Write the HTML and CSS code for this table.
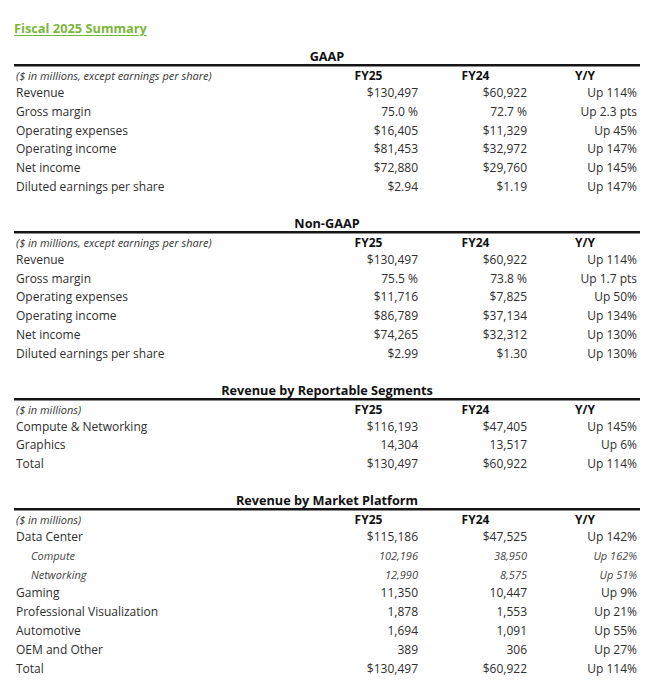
FILE: index.html
```html
<!DOCTYPE html>
<html lang="en">
<head>
<meta charset="utf-8">
<title>Fiscal 2025 Summary</title>
<link rel="stylesheet" href="styles.css">
</head>
<body>
<div class="page">
  <h1 class="title">Fiscal 2025 Summary</h1>

  <section class="block">
    <div class="block-title">GAAP</div>
    <div class="row sub"><span class="label">($ in millions, except earnings per share)</span><span class="col">FY25</span><span class="col">FY24</span><span class="col">Y/Y</span></div>
    <div class="row"><span class="label">Revenue</span><span class="val">$130,497</span><span class="val">$60,922</span><span class="val">Up 114%</span></div>
    <div class="row"><span class="label">Gross margin</span><span class="val">75.0 %</span><span class="val">72.7 %</span><span class="val">Up 2.3 pts</span></div>
    <div class="row"><span class="label">Operating expenses</span><span class="val">$16,405</span><span class="val">$11,329</span><span class="val">Up 45%</span></div>
    <div class="row"><span class="label">Operating income</span><span class="val">$81,453</span><span class="val">$32,972</span><span class="val">Up 147%</span></div>
    <div class="row"><span class="label">Net income</span><span class="val">$72,880</span><span class="val">$29,760</span><span class="val">Up 145%</span></div>
    <div class="row"><span class="label">Diluted earnings per share</span><span class="val">$2.94</span><span class="val">$1.19</span><span class="val">Up 147%</span></div>
  </section>

  <section class="block">
    <div class="block-title">Non-GAAP</div>
    <div class="row sub"><span class="label">($ in millions, except earnings per share)</span><span class="col">FY25</span><span class="col">FY24</span><span class="col">Y/Y</span></div>
    <div class="row"><span class="label">Revenue</span><span class="val">$130,497</span><span class="val">$60,922</span><span class="val">Up 114%</span></div>
    <div class="row"><span class="label">Gross margin</span><span class="val">75.5 %</span><span class="val">73.8 %</span><span class="val">Up 1.7 pts</span></div>
    <div class="row"><span class="label">Operating expenses</span><span class="val">$11,716</span><span class="val">$7,825</span><span class="val">Up 50%</span></div>
    <div class="row"><span class="label">Operating income</span><span class="val">$86,789</span><span class="val">$37,134</span><span class="val">Up 134%</span></div>
    <div class="row"><span class="label">Net income</span><span class="val">$74,265</span><span class="val">$32,312</span><span class="val">Up 130%</span></div>
    <div class="row"><span class="label">Diluted earnings per share</span><span class="val">$2.99</span><span class="val">$1.30</span><span class="val">Up 130%</span></div>
  </section>

  <section class="block">
    <div class="block-title">Revenue by Reportable Segments</div>
    <div class="row sub"><span class="label">($ in millions)</span><span class="col">FY25</span><span class="col">FY24</span><span class="col">Y/Y</span></div>
    <div class="row"><span class="label">Compute &amp; Networking</span><span class="val">$116,193</span><span class="val">$47,405</span><span class="val">Up 145%</span></div>
    <div class="row"><span class="label">Graphics</span><span class="val">14,304</span><span class="val">13,517</span><span class="val">Up 6%</span></div>
    <div class="row"><span class="label">Total</span><span class="val">$130,497</span><span class="val">$60,922</span><span class="val">Up 114%</span></div>
  </section>

  <section class="block">
    <div class="block-title">Revenue by Market Platform</div>
    <div class="row sub"><span class="label">($ in millions)</span><span class="col">FY25</span><span class="col">FY24</span><span class="col">Y/Y</span></div>
    <div class="row"><span class="label">Data Center</span><span class="val">$115,186</span><span class="val">$47,525</span><span class="val">Up 142%</span></div>
    <div class="row minor"><span class="label">Compute</span><span class="val">102,196</span><span class="val">38,950</span><span class="val">Up 162%</span></div>
    <div class="row minor"><span class="label">Networking</span><span class="val">12,990</span><span class="val">8,575</span><span class="val">Up 51%</span></div>
    <div class="row"><span class="label">Gaming</span><span class="val">11,350</span><span class="val">10,447</span><span class="val">Up 9%</span></div>
    <div class="row"><span class="label">Professional Visualization</span><span class="val">1,878</span><span class="val">1,553</span><span class="val">Up 21%</span></div>
    <div class="row"><span class="label">Automotive</span><span class="val">1,694</span><span class="val">1,091</span><span class="val">Up 55%</span></div>
    <div class="row"><span class="label">OEM and Other</span><span class="val">389</span><span class="val">306</span><span class="val">Up 27%</span></div>
    <div class="row"><span class="label">Total</span><span class="val">$130,497</span><span class="val">$60,922</span><span class="val">Up 114%</span></div>
  </section>
</div>
</body>
</html>
```

FILE: styles.css
```css
html, body {
  margin: 0;
  padding: 0;
  background: #ffffff;
}

.page {
  width: 626px;
  padding: 0 12px 0 14px;
  font-family: "Open Sans", "Liberation Sans", sans-serif;
  font-size: 12px;
  color: #2e2e2e;
}

.title {
  margin: 0;
  padding-top: 20px;
  height: 28px;
  font-size: 12.8px;
  line-height: 16px;
  font-weight: 700;
  color: #7cb637;
  text-decoration: underline;
  text-decoration-thickness: 1px;
  text-underline-offset: 2px;
}

.block {
  display: flex;
  flex-direction: column;
  margin-bottom: 18px;
}

.block-title {
  text-align: center;
  font-weight: 700;
  color: #111;
  font-size: 12.7px;
  line-height: 16px;
  height: 16px;
  border-bottom: 2px solid #151515;
  box-shadow: 0 1px 0 #8a8a8a;
}

.row {
  display: grid;
  grid-template-columns: 302px 105px 109px 110px;
  height: 18.8px;
  line-height: 18.8px;
  align-items: center;
}

.row .label {
  padding-left: 2px;
  white-space: nowrap;
}

.row .val {
  text-align: right;
  padding-right: 3px;
}

.row.sub {
  height: 16px;
  line-height: 16px;
  padding-top: 2px;
}

.row.sub .label {
  font-style: italic;
  font-size: 11px;
  color: #333;
}

.row.sub .col {
  text-align: center;
  font-weight: 700;
  color: #111;
  font-size: 12px;
}

.row.minor {
  font-style: italic;
  font-size: 11px;
  color: #444;
}

.row.minor .label {
  padding-left: 17px;
}
```
